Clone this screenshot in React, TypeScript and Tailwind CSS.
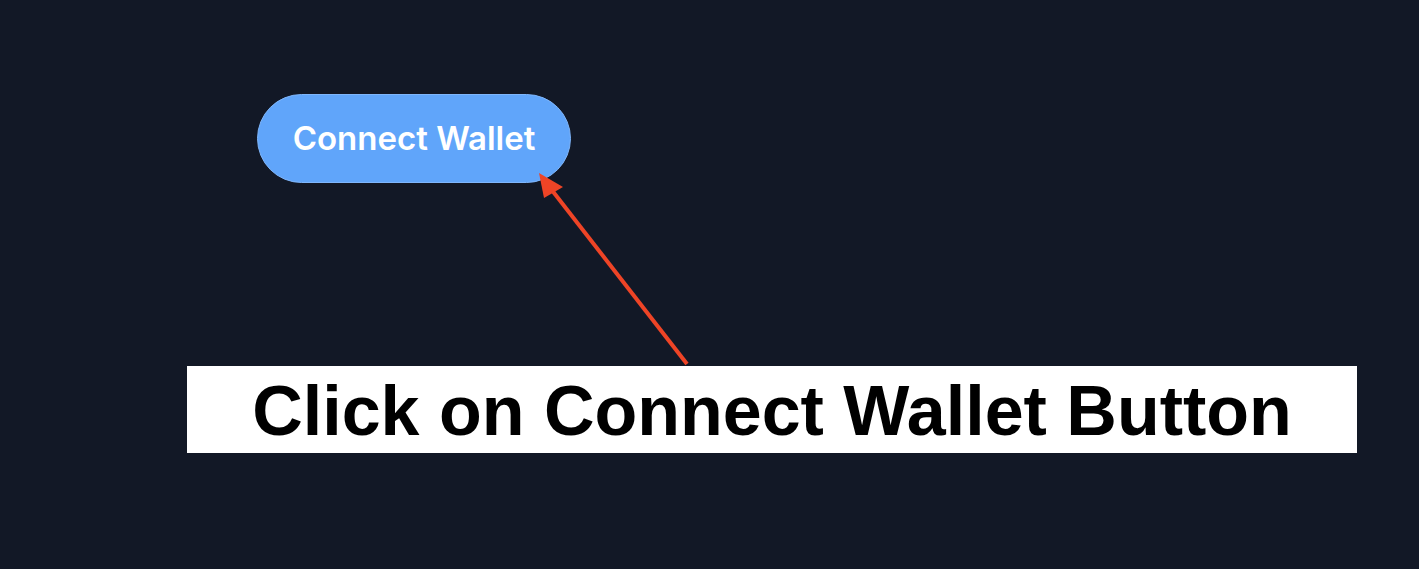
import React from 'react'

function Arrow() {
  return (
    <svg
      className="absolute left-0 top-0 pointer-events-none"
      width={1419}
      height={569}
      viewBox="0 0 1419 569"
      aria-hidden
    >
      <line x1={687} y1={364} x2={551} y2={189} stroke="#ee4426" strokeWidth={4} />
      <polygon points="539,173 563,187 544,198" fill="#ee4426" />
    </svg>
  )
}

export default function App(): React.ReactElement {
  return (
    <div className="relative w-[1419px] h-[569px] bg-[#121826] overflow-hidden">
      <div className="pt-[94px] pl-[257px]">
        <button
          type="button"
          className="flex items-center justify-center w-[314px] h-[89px] rounded-full bg-[#60a5fa] border border-[#7fb6fb] text-white text-[33px] font-semibold font-['Inter',sans-serif]"
        >
          Connect Wallet
        </button>
      </div>

      <Arrow />

      <div className="absolute left-[187px] top-[366px] w-[1170px] h-[87px] bg-white flex items-center justify-center">
        <span className="text-black text-[70px] font-bold leading-none pt-[2px] font-['Liberation_Sans',Arial,sans-serif]">
          Click on Connect Wallet Button
        </span>
      </div>
    </div>
  )
}
